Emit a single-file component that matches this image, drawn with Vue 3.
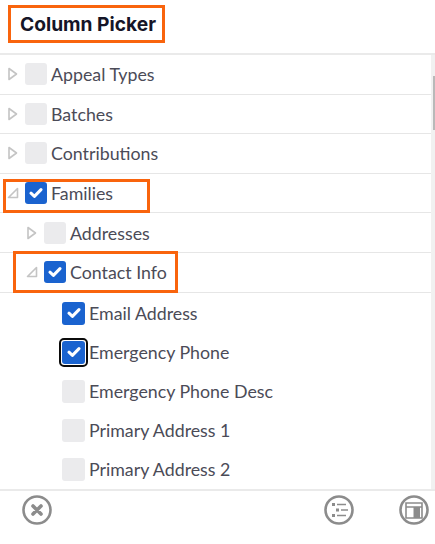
<template>
  <div class="picker">
    <header class="head">
      <h1 class="title">Column Picker</h1>
    </header>

    <div class="list">
      <div
        v-for="row in rows"
        :key="row.label"
        class="row"
        :class="[`level-${row.level}`, { leaf: row.leaf }]"
      >
        <div class="row-inner" :class="{ marked: row.marked }">
          <svg v-if="!row.leaf" class="caret" width="12" height="14" viewBox="0 0 12 14">
            <path v-if="row.open" d="M10.5 2.5V11.5H1.5Z" />
            <path v-else d="M2 1.5L9.5 7L2 12.5Z" />
          </svg>
          <span class="box" :class="{ on: row.checked, focus: row.focus }">
            <svg v-if="row.checked" width="14" height="12" viewBox="0 0 14 12">
              <path d="M2 6.2L5.4 9.4L12 2.6" />
            </svg>
          </span>
          <span class="label">{{ row.label }}</span>
        </div>
      </div>
      <div class="track"><div class="thumb"></div></div>
    </div>

    <footer class="foot">
      <button class="icon-btn" type="button" aria-label="Close">
        <svg width="30" height="30" viewBox="0 0 30 30">
          <circle cx="15" cy="15" r="13.5" />
          <path class="thick" d="M11 11L19 19M19 11L11 19" />
        </svg>
      </button>
      <div class="foot-right">
        <button class="icon-btn" type="button" aria-label="Options">
          <svg width="30" height="30" viewBox="0 0 30 30">
            <circle cx="15" cy="15" r="13.5" />
            <path class="thin" d="M13 9.5H22M17 15H24M13 20.5H22" />
            <path class="dots" d="M8 9.5H11M12 15H15M8 20.5H11" />
          </svg>
        </button>
        <button class="icon-btn" type="button" aria-label="Layout">
          <svg width="30" height="30" viewBox="0 0 30 30">
            <circle cx="15" cy="15" r="13.5" />
            <path class="thin" d="M7 8H23V23H7ZM7 12H23" />
            <path class="fill" d="M14.5 12H21V23H14.5Z" />
          </svg>
        </button>
      </div>
    </footer>
  </div>
</template>

<script setup>
const rows = [
  { label: 'Appeal Types', level: 0 },
  { label: 'Batches', level: 0 },
  { label: 'Contributions', level: 0 },
  { label: 'Families', level: 0, open: true, checked: true, marked: true },
  { label: 'Addresses', level: 1 },
  { label: 'Contact Info', level: 1, open: true, checked: true, marked: true },
  { label: 'Email Address', level: 2, leaf: true, checked: true },
  { label: 'Emergency Phone', level: 2, leaf: true, checked: true, focus: true },
  { label: 'Emergency Phone Desc', level: 2, leaf: true },
  { label: 'Primary Address 1', level: 2, leaf: true },
  { label: 'Primary Address 2', level: 2, leaf: true }
]
</script>

<style>
html, body { margin: 0; background: #fff; }
</style>

<style scoped>
* { box-sizing: border-box; margin: 0; padding: 0; }
.picker { width: 435px; height: 544px; display: flex; flex-direction: column; background: #fff; font-family: 'Lato', 'Open Sans', sans-serif; overflow: hidden; }
.head { height: 55px; padding: 5px 0 0 8px; border-bottom: 2px solid #eaeaea; flex-shrink: 0; }
.title { display: inline-block; height: 38px; padding: 0 6px 0 9px; border: 3px solid #f9640d; font-family: 'Inter', sans-serif; font-size: 19.2px; font-weight: 700; line-height: 33px; color: #151528; white-space: nowrap; }
.list { position: relative; height: 434px; flex-shrink: 0; overflow: hidden; }
.track { position: absolute; top: 0; right: 0; bottom: 0; width: 4px; background: #f1f1f1; }
.thumb { margin: 21px 0 0 2px; width: 2px; height: 54px; background: #b9b9b9; }
.row { height: 39.6px; display: flex; align-items: center; border-bottom: 1px solid #e6e6e6; margin-right: 4px; }
.row.leaf { height: 39px; padding-top: 2px; border-bottom: none; }
.row-inner { position: relative; display: flex; align-items: center; height: 22px; }
.level-0 .row-inner { padding-left: 7px; }
.level-1 .row-inner { padding-left: 26px; }
.level-2 .row-inner { padding-left: 62px; }
.marked::before { content: ''; position: absolute; box-sizing: border-box; border: 3px solid #f9640d; pointer-events: none; }
.level-0.row .marked::before { left: 3px; top: -3px; width: 147px; height: 34px; }
.level-1.row .marked::before { left: 13px; top: -10px; width: 165px; height: 42px; }
.caret { width: 12px; height: 14px; flex-shrink: 0; margin-right: 6px; }
.caret path { fill: #fff; stroke: #c4c4c4; stroke-width: 1.6; stroke-linejoin: round; }
.box { position: relative; width: 22px; height: 22px; flex-shrink: 0; display: flex; align-items: center; justify-content: center; border-radius: 3px; background: #ebebed; }
.leaf .box { width: 23px; height: 23px; }
.box.on { background: #1a63cf; }
.box svg path { fill: none; stroke: #fff; stroke-width: 3; stroke-linecap: round; stroke-linejoin: round; }
.box.focus::after { content: ''; position: absolute; box-sizing: border-box; inset: -3px; border: 2px solid #0b0b0b; border-radius: 5px; }
.label { margin-left: 4px; font-size: 17.8px; line-height: 22px; color: #4b4b57; white-space: nowrap; }
.foot { flex: 1; display: flex; justify-content: space-between; align-items: flex-start; padding: 4px 6px 0 22px; border-top: 2px solid #eaeaea; }
.foot-right { display: flex; gap: 45px; }
.icon-btn { width: 30px; height: 30px; border: none; background: none; cursor: pointer; }
.icon-btn svg { display: block; }
.icon-btn circle { fill: none; stroke: #8c8c8c; stroke-width: 2.6; }
.icon-btn .thick { fill: none; stroke: #8c8c8c; stroke-width: 3.6; stroke-linecap: round; }
.icon-btn .thin { fill: none; stroke: #8c8c8c; stroke-width: 1.6; }
.icon-btn .dots { fill: none; stroke: #8c8c8c; stroke-width: 2.8; }
.icon-btn .fill { fill: #8c8c8c; }
</style>
